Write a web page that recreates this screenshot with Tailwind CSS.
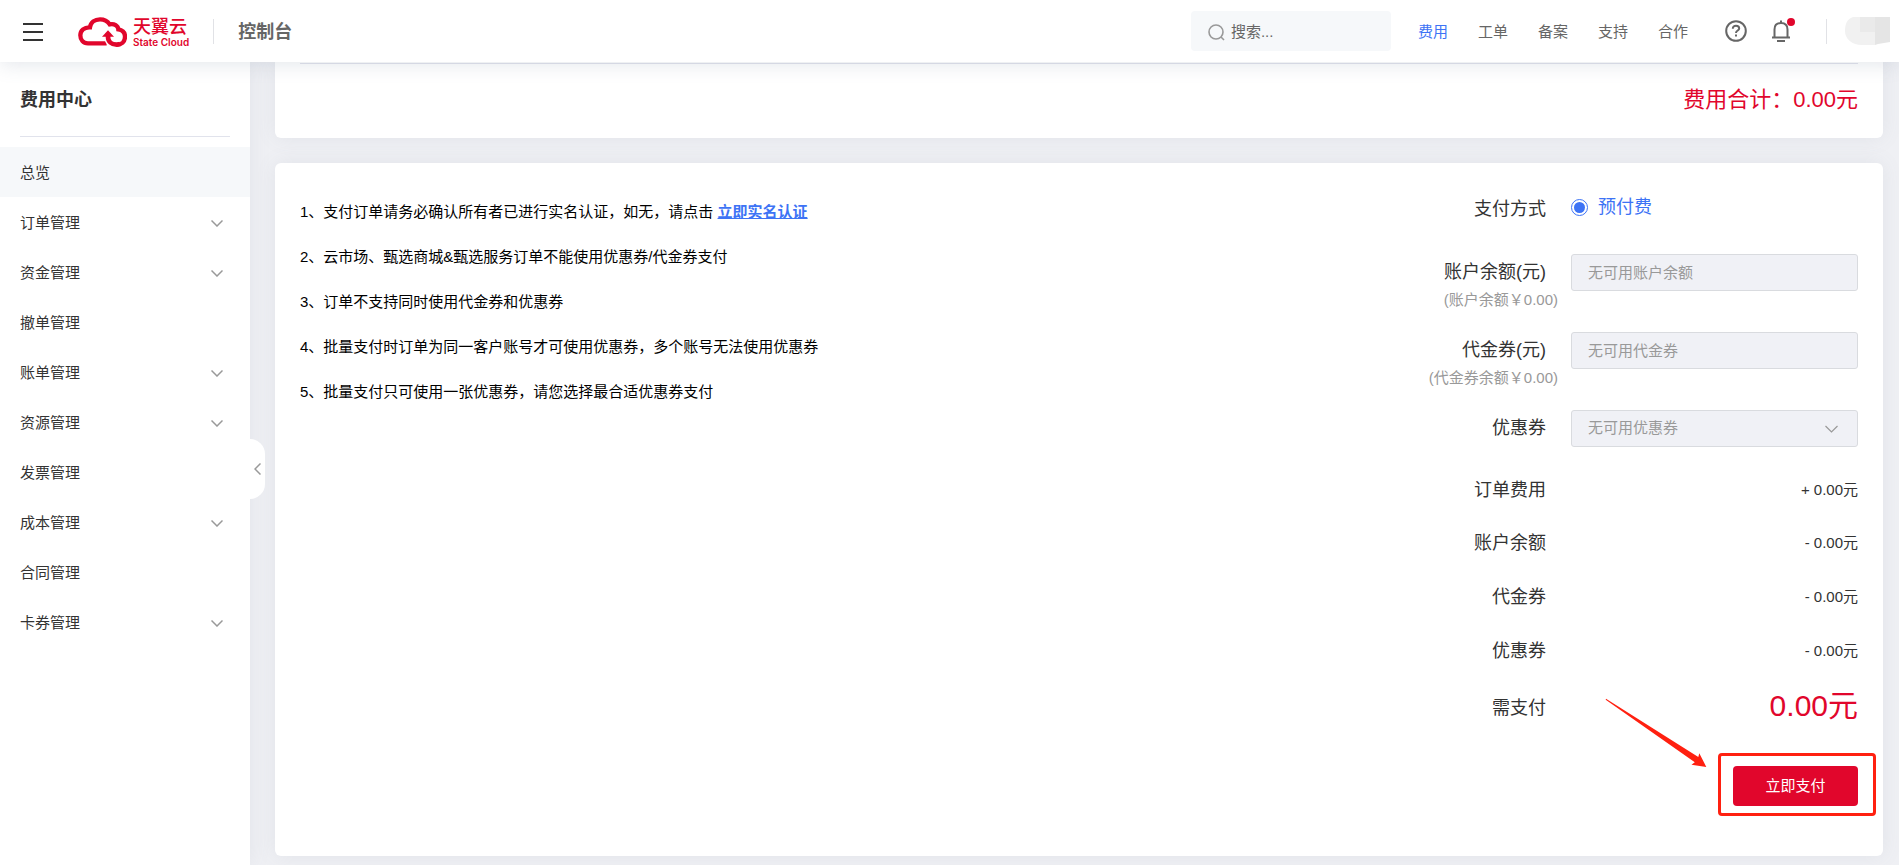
<!DOCTYPE html>
<html lang="zh-CN">
<head>
<title>费用中心 - 天翼云控制台</title>
<meta charset="utf-8">
<meta name="viewport" content="width=device-width, initial-scale=1">
<script src="https://cdn.jsdelivr.net/npm/@tailwindcss/browser@4"></script>
</head>
<body class="min-h-screen flex flex-col bg-[#eff0f4] text-[#333] text-[15px] font-['Liberation_Sans','Noto_Sans_CJK_SC',sans-serif]">
  <!-- Top bar -->
  <header class="relative z-20 flex items-center h-[62px] bg-white shadow-[0_2px_20px_rgba(110,125,150,0.2)]">
    <button type="button" aria-label="菜单" class="ml-[23px] w-[20px]">
      <svg class="block" width="20" height="20" viewBox="0 0 20 20" stroke="#333" stroke-width="2"><path d="M0 3H20M0 11H20M0 19H20"/></svg>
    </button>
    <a href="#" class="ml-[35px] pt-0.5 flex items-center gap-1.5 text-[#e1062c]">
      <svg width="49" height="30" viewBox="234 51 147 90" fill="none">
        <path d="M320 130H264C249 130 241 118 241 106C241 91 253 81 270 82C272 67 284 58 300 58C314 58 323 64 329 73C343 70 354 77 355 88C368 90 375 98 375 110C375 125 364 134 350 134" stroke="currentColor" stroke-width="13"/>
        <path d="M350 134C335 134 324 125 324 110V100" stroke="#fff" stroke-width="22"/>
        <path d="M360 132C357 133 354 134 350 134C335 134 324 125 324 110V100" stroke="currentColor" stroke-width="14"/>
        <path d="M324 91L342 110H306Z" fill="currentColor"/>
      </svg>
      <span class="flex flex-col">
        <span class="text-[18px] leading-[20px] font-medium">天翼云</span>
        <span class="text-[10px] leading-[10px] font-semibold font-[Inter,sans-serif]">State Cloud</span>
      </span>
    </a>
    <div class="ml-6 h-[25px] w-px bg-[#e1e2e6]"></div>
    <h1 class="ml-6 pt-0.5 text-[18px] font-bold text-[#666]">控制台</h1>

    <label class="ml-auto flex items-center gap-1.5 w-[200px] h-10 pl-[17px] pt-0.5 rounded bg-[#f6f8fa]">
      <svg class="shrink-0" width="17" height="17" viewBox="0 0 17 17" fill="none" stroke="#999" stroke-width="1.6"><circle cx="8" cy="8" r="7"/><path d="M13 13L16 16"/></svg>
      <input type="text" aria-label="搜索" placeholder="搜索..." class="w-full outline-none placeholder:text-[#666]">
    </label>
    <nav class="ml-[27px] pt-0.5 flex gap-[30px] text-[#666]">
      <a href="#" class="text-[#3d73f5]">费用</a>
      <a href="#">工单</a>
      <a href="#">备案</a>
      <a href="#">支持</a>
      <a href="#">合作</a>
    </nav>
    <button type="button" aria-label="帮助" class="ml-[37px]">
      <svg class="block" width="22" height="22" viewBox="0 0 22 22" fill="none" stroke="#666" stroke-width="2"><circle cx="11" cy="11" r="9.8"/><path d="M7.800 8.700C7.800 6.900 9.100 5.800 11 5.800S14.200 6.900 14.200 8.500C14.200 10.400 11 10.600 11 12.900M11 14.600V16.600"/></svg>
    </button>
    <button type="button" aria-label="消息" class="ml-6">
      <svg class="block" width="26" height="26" viewBox="0 0 26 26" fill="none" stroke="#666" stroke-width="2"><path d="M1 19.500H19M3.500 19V11.500C3.500 7.500 6 5 10 5S16.500 7.500 16.500 11.500V19M10 5V2.500M6 23H14"/><circle cx="20" cy="4" r="4" fill="#e1062c" stroke="none"/></svg>
    </button>
    <div class="ml-[29px] h-[25px] w-px bg-[#e1e2e6]"></div>
    <!-- Masked user name -->
    <svg class="ml-[18px] mr-[9px]" width="45" height="28" viewBox="0 0 45 28"><path d="M8 0H30V28H17C7 28 0 22 0 14C0 7 2 2 8 0Z" fill="#f1f1f1"/><path d="M15 0H30V15H15Z" fill="#eaeaea"/><path d="M30 0H45V25L33 27L30 28Z" fill="#e5e5e5"/></svg>
  </header>

  <div class="flex flex-1">
    <!-- Side menu -->
    <aside class="relative z-10 w-[250px] shrink-0 bg-white shadow-[0_0_20px_rgba(110,120,140,0.1)]">
      <div class="mx-5 h-[75px] border-b border-[#e1e3ec]">
        <h2 class="pt-[25px] text-[18px] leading-[26px] font-bold">费用中心</h2>
      </div>
      <ul class="mt-[10px]">
        <li><a href="#" class="flex items-center h-[50px] px-5 pt-0.5 bg-[#f6f8fa]">总览</a></li>
        <li><a href="#" class="flex items-center justify-between h-[50px] pl-5 pr-[27px] pt-0.5">订单管理<svg width="12" height="8" viewBox="0 0 12 8" fill="none" stroke="#999" stroke-width="1.5"><path d="M0.500 1.500L6 7L11.500 1.500"/></svg></a></li>
        <li><a href="#" class="flex items-center justify-between h-[50px] pl-5 pr-[27px] pt-0.5">资金管理<svg width="12" height="8" viewBox="0 0 12 8" fill="none" stroke="#999" stroke-width="1.5"><path d="M0.500 1.500L6 7L11.500 1.500"/></svg></a></li>
        <li><a href="#" class="flex items-center h-[50px] px-5 pt-0.5">撤单管理</a></li>
        <li><a href="#" class="flex items-center justify-between h-[50px] pl-5 pr-[27px] pt-0.5">账单管理<svg width="12" height="8" viewBox="0 0 12 8" fill="none" stroke="#999" stroke-width="1.5"><path d="M0.500 1.500L6 7L11.500 1.500"/></svg></a></li>
        <li><a href="#" class="flex items-center justify-between h-[50px] pl-5 pr-[27px] pt-0.5">资源管理<svg width="12" height="8" viewBox="0 0 12 8" fill="none" stroke="#999" stroke-width="1.5"><path d="M0.500 1.500L6 7L11.500 1.500"/></svg></a></li>
        <li><a href="#" class="flex items-center h-[50px] px-5 pt-0.5">发票管理</a></li>
        <li><a href="#" class="flex items-center justify-between h-[50px] pl-5 pr-[27px] pt-0.5">成本管理<svg width="12" height="8" viewBox="0 0 12 8" fill="none" stroke="#999" stroke-width="1.5"><path d="M0.500 1.500L6 7L11.500 1.500"/></svg></a></li>
        <li><a href="#" class="flex items-center h-[50px] px-5 pt-0.5">合同管理</a></li>
        <li><a href="#" class="flex items-center justify-between h-[50px] pl-5 pr-[27px] pt-0.5">卡券管理<svg width="12" height="8" viewBox="0 0 12 8" fill="none" stroke="#999" stroke-width="1.5"><path d="M0.500 1.500L6 7L11.500 1.500"/></svg></a></li>
      </ul>
      <!-- Collapse handle -->
      <button type="button" aria-label="收起" class="absolute top-[377px] left-full flex items-center justify-end w-[15px] h-[60px] pr-1 rounded-r-[15px] bg-white">
        <svg width="7" height="12" viewBox="0 0 7 12" fill="none" stroke="#999" stroke-width="1.5"><path d="M6.500 0.500L1 6L6.500 11.500"/></svg>
      </button>
    </aside>

    <main class="flex-1 pl-[25px] pr-4 pb-2">
      <!-- Fee total -->
      <section class="h-[76px] px-[25px] rounded-b-md bg-white shadow-[0_0_20px_rgba(110,120,140,0.1)]">
        <div class="h-[2px] border-b border-[#e1e3ec]"></div>
        <p class="pt-5 text-right text-[22px] leading-[32px] text-[#e1062c]">费用合计：0.00元</p>
      </section>

      <!-- Payment -->
      <section class="mt-[25px] flex justify-between pt-[25px] px-[25px] pb-[50px] rounded-md bg-white shadow-[0_0_20px_rgba(110,120,140,0.1)]">
        <div class="pt-[11px] leading-[25px] text-black space-y-5">
          <p>1、支付订单请务必确认所有者已进行实名认证，如无，请点击 <a href="#" class="font-bold underline text-[#3d73f5]">立即实名认证</a></p>
          <p>2、云市场、甄选商城&amp;甄选服务订单不能使用优惠券/代金券支付</p>
          <p>3、订单不支持同时使用代金券和优惠券</p>
          <p>4、批量支付时订单为同一客户账号才可使用优惠券，多个账号无法使用优惠券</p>
          <p>5、批量支付只可使用一张优惠券，请您选择最合适优惠券支付</p>
        </div>

        <form class="w-[440px]">
          <div class="flex justify-end items-center gap-[25px] h-10 mb-[26px] text-[18px]">
            <span class="pt-0.5">支付方式</span>
            <label class="flex items-center gap-[10px] w-[287px] pb-0.5 text-[#3d73f5]">
              <input type="radio" name="payType" checked class="appearance-none grid place-items-center size-[17px] rounded-full border border-[#3d73f5] before:size-[11px] before:rounded-full before:bg-[#3d73f5]">预付费
            </label>
          </div>
          <div class="flex justify-end gap-[25px] h-[78px]">
            <div class="flex flex-col items-end">
              <label for="balance" class="text-[18px] leading-9">账户余额(元)</label>
              <span class="-mr-3 leading-5 text-[#999]">(账户余额￥0.00)</span>
            </div>
            <input id="balance" type="text" disabled placeholder="无可用账户余额" class="w-[287px] h-[37px] px-4 rounded-[3px] border border-[#d9dbdf] bg-[#f0f1f6] placeholder:text-[#999]">
          </div>
          <div class="flex justify-end gap-[25px] h-[78px]">
            <div class="flex flex-col items-end">
              <label for="voucher" class="text-[18px] leading-9">代金券(元)</label>
              <span class="-mr-3 leading-5 text-[#999]">(代金券余额￥0.00)</span>
            </div>
            <input id="voucher" type="text" disabled placeholder="无可用代金券" class="w-[287px] h-[37px] px-4 rounded-[3px] border border-[#d9dbdf] bg-[#f0f1f6] placeholder:text-[#999]">
          </div>
          <div class="flex justify-end gap-[25px] h-[54px]">
            <label for="coupon" class="text-[18px] leading-9">优惠券</label>
            <div class="relative w-[287px]">
              <select id="coupon" disabled class="appearance-none w-full h-[37px] px-4 rounded-[3px] border border-[#d9dbdf] bg-[#f0f1f6] text-[#999] opacity-100">
                <option>无可用优惠券</option>
              </select>
              <svg class="absolute right-5 top-[15px]" width="13" height="8" viewBox="0 0 13 8" fill="none" stroke="#999" stroke-width="1.2"><path d="M0.500 1L6.500 7L12.500 1"/></svg>
            </div>
          </div>

          <!-- Fee details -->
          <dl>
            <div class="flex justify-end items-center gap-[25px] h-[53px]"><dt class="text-[18px]">订单费用</dt><dd class="w-[287px] text-right">+ 0.00元</dd></div>
            <div class="flex justify-end items-center gap-[25px] h-[53px]"><dt class="text-[18px]">账户余额</dt><dd class="w-[287px] text-right">- 0.00元</dd></div>
            <div class="flex justify-end items-center gap-[25px] h-[54px]"><dt class="text-[18px]">代金券</dt><dd class="w-[287px] text-right">- 0.00元</dd></div>
            <div class="flex justify-end items-center gap-[25px] h-[54px]"><dt class="text-[18px]">优惠券</dt><dd class="w-[287px] text-right">- 0.00元</dd></div>
            <div class="flex justify-end items-center gap-[25px] h-[56px]"><dt class="pt-1 text-[18px]">需支付</dt><dd class="w-[287px] text-right text-[30px] leading-[40px] text-[#e1062c]">0.00元</dd></div>
          </dl>

          <div class="relative mt-8 ml-auto w-[125px]">
            <button type="button" class="block w-full h-10 rounded bg-[#e1062c] text-white">立即支付</button>
            <!-- Highlight box and arrow -->
            <div class="absolute -top-[13px] -bottom-[10px] -left-[15px] -right-[18px] border-3 border-[#ff2010] rounded-[4px] pointer-events-none"></div>
            <svg class="absolute -left-[128px] -top-[68px] pointer-events-none" width="102" height="70" viewBox="45 28 102 70" fill="#ff2010"><path d="M46 28.700L138.300 87L139.300 83.300L146.300 96.900L131.500 94.700L134.800 92.300L45.700 29.700Z"/></svg>
          </div>
        </form>
      </section>
    </main>
  </div>
</body>
</html>
